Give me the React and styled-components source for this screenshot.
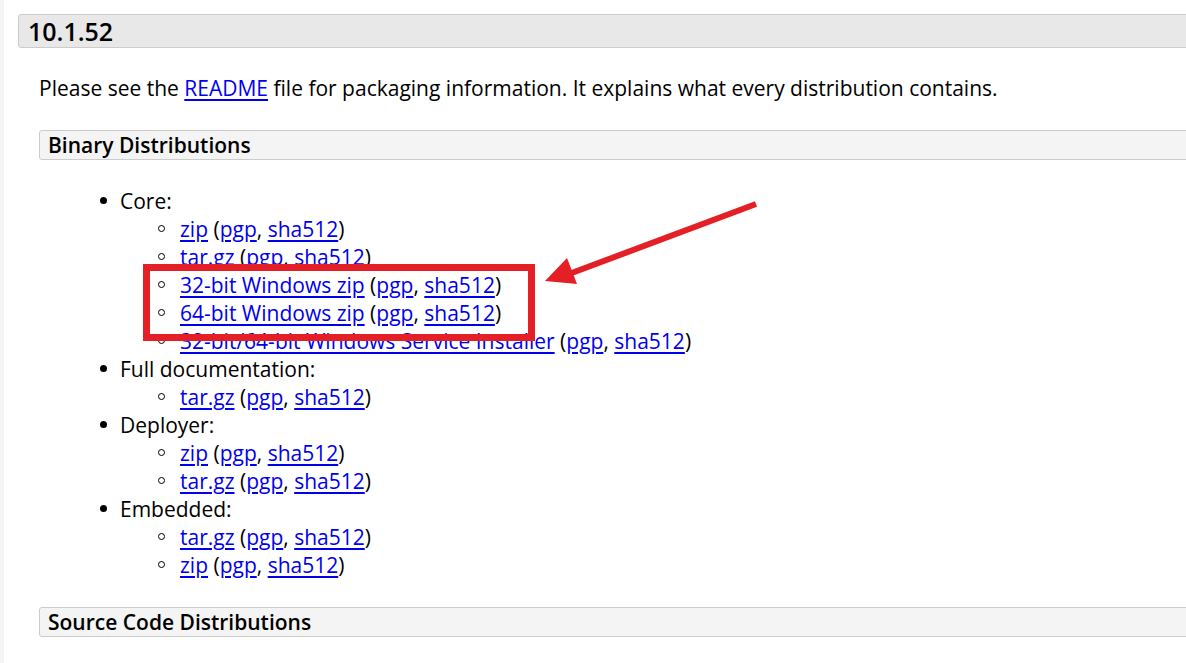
import React from "react";
import styled, { createGlobalStyle } from "styled-components";

const Global = createGlobalStyle`
  html, body { margin: 0; padding: 0; background: #fff; overflow: hidden; }
  body { font-family: "Open Sans", "Noto Sans", sans-serif; color: #000; }
`;

const Page = styled.div`
  position: relative;
  width: 1240px;
  min-height: 663px;
  border-left: 4px solid #f4f4f4;
  padding: 14px 0 0 14px;
  box-sizing: border-box;
`;

const H3 = styled.h3`
  margin: 0;
  height: 34px;
  box-sizing: border-box;
  display: flex;
  align-items: center;
  padding-left: 9px;
  background: #e8e8e8;
  border: 1px solid #cccccc;
  border-radius: 3px;
  font-size: 25px;
  font-weight: 600;
  line-height: 1;
`;

const Body = styled.div`
  padding-left: 21px;
`;

const P = styled.p`
  margin: 26px 0 0 0;
  font-size: 21px;
  line-height: 28px;
`;

const H4 = styled.h4`
  margin: ${(p) => p.$top}px 0 0 0;
  height: 30px;
  box-sizing: border-box;
  display: flex;
  align-items: center;
  padding-left: 8px;
  background: #f4f4f4;
  border: 1px solid #cccccc;
  border-radius: 3px;
  font-size: 21px;
  font-weight: 600;
  line-height: 1;
`;

const List = styled.ul`
  list-style: none;
  margin: ${(p) => (p.$nested ? 0 : 27)}px 0 0 0;
  padding: 0 0 0 ${(p) => (p.$nested ? 60 : 81)}px;
  font-size: 21px;
  line-height: 28px;
`;

const Item = styled.li`
  position: relative;
  white-space: nowrap;
  &::before {
    content: "";
    position: absolute;
    top: 10px;
    box-sizing: border-box;
    width: 7px;
    height: 7px;
    border-radius: 50%;
    left: ${(p) => (p.$nested ? -22 : -20)}px;
    background: ${(p) => (p.$nested ? "transparent" : "#000")};
    border: ${(p) => (p.$nested ? "1.5px solid #000" : "none")};
  }
`;

const A = styled.a`
  color: #0000ee;
  text-decoration: underline;
  text-underline-offset: 3px;
`;

const RedBox = styled.div`
  position: absolute;
  left: 139px;
  top: 264px;
  width: 392px;
  height: 77px;
  box-sizing: border-box;
  border: 7px solid #e41f26;
`;

const Arrow = styled.svg`
  position: absolute;
  left: 530px;
  top: 190px;
  width: 240px;
  height: 110px;
`;

const Links = ({ name }) => (
  <>
    <A href="#">{name}</A> (<A href="#">pgp</A>, <A href="#">sha512</A>)
  </>
);

const groups = [
  { label: "Core:", items: ["zip", "tar.gz", "32-bit Windows zip", "64-bit Windows zip", "32-bit/64-bit Windows Service Installer"] },
  { label: "Full documentation:", items: ["tar.gz"] },
  { label: "Deployer:", items: ["zip", "tar.gz"] },
  { label: "Embedded:", items: ["tar.gz", "zip"] },
];

export default function App() {
  return (
    <>
      <Global />
      <Page>
        <H3>10.1.52</H3>
        <Body>
          <P>
            Please see the <A href="#">README</A> file for packaging information. It explains what every distribution contains.
          </P>
          <H4 $top={28}>Binary Distributions</H4>
          <List>
            {groups.map((g) => (
              <Item key={g.label}>
                {g.label}
                <List $nested>
                  {g.items.map((it) => (
                    <Item $nested key={it}>
                      <Links name={it} />
                    </Item>
                  ))}
                </List>
              </Item>
            ))}
          </List>
          <H4 $top={28}>Source Code Distributions</H4>
        </Body>
        <RedBox />
        <Arrow viewBox="0 0 240 110">
          <line x1="222" y1="14" x2="35" y2="84" stroke="#e41f26" strokeWidth="6" />
          <polygon points="11,91 33,68 43,94" fill="#e41f26" />
        </Arrow>
      </Page>
    </>
  );
}
